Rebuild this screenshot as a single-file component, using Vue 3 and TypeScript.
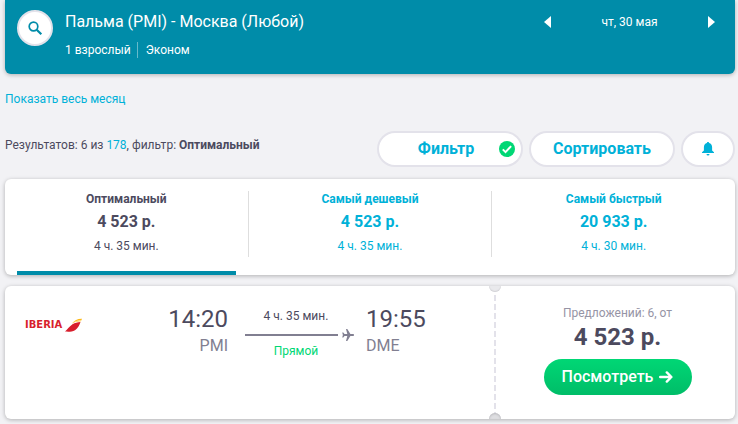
<script setup lang="ts">
import { ref } from 'vue'

interface SortTab {
  id: string
  title: string
  price: string
  duration: string
}

const tabs: SortTab[] = [
  { id: 'best', title: 'Оптимальный', price: '4 523 р.', duration: '4 ч. 35 мин.' },
  { id: 'cheap', title: 'Самый дешевый', price: '4 523 р.', duration: '4 ч. 35 мин.' },
  { id: 'fast', title: 'Самый быстрый', price: '20 933 р.', duration: '4 ч. 30 мин.' },
]

const active = ref('best')
</script>

<template>
  <main class="page">
    <header class="search card">
      <button class="search-btn" type="button" aria-label="Поиск">
        <svg width="16" height="16" viewBox="0 0 16 16" fill="none" stroke="currentColor">
          <circle cx="6.500" cy="6.500" r="4.300" stroke-width="1.700" />
          <path d="M9.700 9.700 14.300 14.300" stroke-width="2.200" />
        </svg>
      </button>
      <div class="trip">
        <h1 class="route">Пальма (PMI) - Москва (Любой)</h1>
        <p class="details"><span>1 взрослый</span><span class="cabin">Эконом</span></p>
      </div>
      <nav class="dates">
        <button class="arrow" type="button" aria-label="Предыдущий день">
          <svg width="7" height="12" viewBox="0 0 7 12"><path d="M7 0v12L0 6z" fill="currentColor" /></svg>
        </button>
        <span class="date">чт, 30 мая</span>
        <button class="arrow" type="button" aria-label="Следующий день">
          <svg width="7" height="12" viewBox="0 0 7 12"><path d="M0 0v12l7-6z" fill="currentColor" /></svg>
        </button>
      </nav>
    </header>

    <a class="month" href="#">Показать весь месяц</a>

    <section class="toolbar">
      <p class="summary">Результатов: 6 из <a href="#">178</a>, фильтр: <b>Оптимальный</b></p>
      <div class="actions">
        <button class="pill" type="button">
          Фильтр
          <svg class="check" width="16" height="16" viewBox="0 0 16 16">
            <circle cx="8" cy="8" r="8" fill="#00d775" />
            <path d="m3.800 8.400 2.700 2.700 5.600-6" fill="none" stroke="#fff" stroke-width="2" />
          </svg>
        </button>
        <button class="pill" type="button">Сортировать</button>
        <button class="pill bell" type="button" aria-label="Уведомления">
          <svg width="12" height="14" viewBox="0 0 12 14" fill="currentColor">
            <path d="M6 0c.7 0 1.100.5 1.100 1.100C9 1.600 10.100 3.200 10.100 5.200v3.300L12 10.300v.7H0v-.7l1.900-1.800V5.200C1.900 3.200 3 1.600 4.900 1.100 4.900.5 5.300 0 6 0z" />
            <path d="M4.500 12h3a1.500 1.500 0 0 1-3 0z" />
          </svg>
        </button>
      </div>
    </section>

    <section class="tabs card">
      <template v-for="(tab, i) in tabs" :key="tab.id">
        <span v-if="i > 0" class="rule"></span>
        <button class="tab" :class="{ active: active === tab.id }" type="button" @click="active = tab.id">
          <b class="tab-title">{{ tab.title }}</b>
          <b class="tab-price">{{ tab.price }}</b>
          <span class="tab-time">{{ tab.duration }}</span>
        </button>
      </template>
    </section>

    <article class="ticket card">
      <div class="flight">
        <div class="airline">
          <span class="brand">IBERIA</span>
          <svg width="17" height="14" viewBox="0 0 17 14">
            <path d="M0 13.600C2.500 11.500 4.500 8.200 7.500 6.300c2.500-1.500 5-1.900 8-2.300-1 3-2.500 6.400-5.500 8.300C7 13.900 3.500 13.900 0 13.600z" fill="#d81e2c" />
            <path d="M7 5.600C9.500 2.200 12.500.7 17 .8L15.900 3.300C12.500 3.300 10 4 7 5.600z" fill="#fdb813" />
            <path d="M8.200 5C10.500 3.200 13 2.500 16.200 2.400" fill="none" stroke="#fff" stroke-width=".5" />
          </svg>
        </div>
        <div class="stop from">
          <span class="clock">14:20</span>
          <span class="code">PMI</span>
        </div>
        <div class="leg">
          <span class="length">4 ч. 35 мин.</span>
          <span class="track">
            <span class="line"></span>
            <svg width="12" height="12" viewBox="0 0 12 12" fill="currentColor">
              <path d="M4 0h1.300l3.100 5H11c.6 0 1 .4 1 1s-.4 1-1 1H8.400l-3.100 5H4l1.300-5H2.500L1.300 8.600H.2L.9 6 .2 3.400h1.100L2.500 5h2.800z" />
            </svg>
          </span>
          <span class="direct">Прямой</span>
        </div>
        <div class="stop">
          <span class="clock">19:55</span>
          <span class="code">DME</span>
        </div>
      </div>
      <div class="offer">
        <span class="offers">Предложений: 6, от</span>
        <b class="price">4 523 р.</b>
        <button class="view" type="button">
          Посмотреть
          <svg width="14" height="12" viewBox="0 0 14 12" fill="none" stroke="currentColor" stroke-width="2.400" stroke-linecap="round" stroke-linejoin="round">
            <path d="M1.200 6h11M7.800 1.400 12.400 6l-4.600 4.600" />
          </svg>
        </button>
      </div>
    </article>
  </main>
</template>

<style>
body {
  background: #f2f2f5;
}
</style>

<style scoped>
.page {
  padding: 0 3px 5px 5px;
  font-family: Roboto, "Liberation Sans", sans-serif;
  font-size: 12px;
  line-height: 16px;
  color: #4c4a5e;
}

h1,
p {
  margin: 0;
}

button {
  padding: 0;
  border: 0;
  background: none;
  font: inherit;
  color: inherit;
  cursor: pointer;
}

a {
  color: #00b1d8;
  text-decoration: none;
}

svg {
  display: block;
  flex: none;
}

.card {
  border-radius: 6px;
  background: #fff;
  box-shadow: 0 1px 4px rgba(0, 0, 0, 0.28);
}

.search {
  display: flex;
  align-items: flex-start;
  gap: 12px;
  padding: 10px 20px 16px 12px;
  border-radius: 0 0 6px 6px;
  background: #008ca9;
  color: #fff;
}

.search-btn {
  display: grid;
  place-items: center;
  width: 36px;
  height: 36px;
  border: 2px solid #e3e2ea;
  border-radius: 50%;
  background: #fff;
  color: #008ca9;
}

.trip {
  flex: 1;
}

.route {
  font-size: 16px;
  font-weight: 400;
  line-height: 24px;
}

.details {
  display: flex;
  margin-top: 8px;
}

.cabin {
  margin-left: 6px;
  padding-left: 8px;
  border-left: 1px solid #66bacb;
}

.dates {
  display: flex;
  align-items: center;
  justify-content: space-between;
  width: 171px;
  height: 24px;
}

.month {
  display: block;
  margin-top: 17px;
}

.toolbar {
  display: flex;
  align-items: center;
  justify-content: space-between;
  margin-top: 24px;
}

.summary {
  padding-bottom: 8px;
}

.actions {
  display: flex;
  gap: 6px;
}

.pill {
  position: relative;
  width: 146px;
  height: 36px;
  border: 2px solid #e3e2ea;
  border-radius: 18px;
  background: #fff;
  color: #00b1d8;
  font-size: 16px;
  font-weight: 700;
}

.check {
  position: absolute;
  top: 8px;
  right: 6px;
}

.pill:first-child {
  padding-right: 8px;
}

.bell {
  display: grid;
  place-items: center;
  width: 54px;
}

.tabs {
  display: grid;
  grid-template-columns: 1fr auto 1fr auto 1fr;
  column-gap: 12px;
  margin-top: 12px;
  padding: 12px 12px 0;
}

.rule {
  width: 1px;
  height: 66px;
  background: #dedede;
}

.tab {
  display: flex;
  flex-direction: column;
  align-items: center;
  height: 84px;
  border-bottom: 4px solid transparent;
  color: #00b1d8;
}

.tab.active {
  border-color: #008ca9;
  color: #4c4a5e;
}

.tab-price {
  margin: 5px 0 6px;
  font-size: 16px;
  line-height: 20px;
}

.ticket {
  display: flex;
  margin-top: 11px;
}

.flight {
  display: flex;
  flex: 1;
  align-items: flex-start;
  padding: 16px 0 0 20px;
}

.airline {
  display: flex;
  align-items: center;
  gap: 3px;
  width: 120px;
  margin-top: 16px;
}

.brand {
  font-family: "DejaVu Sans", sans-serif;
  font-size: 10px;
  font-weight: 700;
  line-height: 12px;
  color: #d81e2c;
}

.stop {
  display: flex;
  flex-direction: column;
}

.from {
  width: 83px;
  align-items: flex-end;
}

.clock {
  font-size: 24px;
  line-height: 34px;
}

.code {
  font-size: 16px;
  line-height: 20px;
  color: #817f91;
}

.leg {
  display: flex;
  flex-direction: column;
  width: 109px;
  margin: 6px 12px 0 17px;
}

.length,
.direct {
  width: 102px;
  text-align: center;
}

.track {
  display: flex;
  align-items: center;
  gap: 4px;
  margin: 5px 0 2px;
  color: #817f91;
}

.line {
  flex: 1;
  height: 2px;
  background: currentColor;
}

.direct {
  color: #00d775;
}

.offer {
  position: relative;
  display: flex;
  flex-direction: column;
  align-items: center;
  box-sizing: border-box;
  width: 241px;
  padding: 19px 0 24px 6px;
  background: repeating-linear-gradient(#e3e2ea 0 6px, transparent 6px 9px) left / 2px 100% no-repeat;
}

.offer::before,
.offer::after {
  content: "";
  position: absolute;
  left: -5px;
  width: 12px;
  height: 6px;
  background: #e9e9ec;
}

.offer::before {
  top: 0;
  border-radius: 0 0 6px 6px;
  box-shadow: inset 0 -1px 1px #d2d2d6;
}

.offer::after {
  bottom: 0;
  border-radius: 6px 6px 0 0;
  background: #dedee1;
  box-shadow: inset 0 1px 2px #b8b8bc;
}

.offers {
  color: #9694a5;
}

.price {
  font-size: 24px;
  line-height: 32px;
}

.view {
  display: flex;
  align-items: center;
  justify-content: center;
  gap: 6px;
  width: 148px;
  height: 36px;
  margin-top: 6px;
  border-radius: 18px;
  background: linear-gradient(#00d775, #00bd68);
  color: #fff;
  font-size: 16px;
  font-weight: 500;
}
</style>
